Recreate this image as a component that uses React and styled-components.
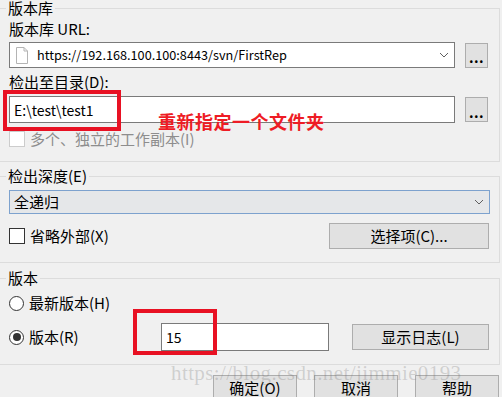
import React from 'react';
import styled, { createGlobalStyle } from 'styled-components';

const GlobalStyle = createGlobalStyle`
  html, body {
    margin: 0;
    padding: 0;
    background: #f0f0f0;
  }
  body {
    font-family: "Noto Sans CJK SC", "Noto Sans", sans-serif;
    font-size: 15px;
    color: #000;
  }
`;

const Window = styled.div`
  position: relative;
  width: 502px;
  height: 397px;
  overflow: hidden;
  background: #f0f0f0;
  display: flex;
  flex-direction: column;
`;

const Group = styled.fieldset`
  margin: ${p => p.$top || 0}px 0 0 -2px;
  width: 502px;
  box-sizing: border-box;
  min-width: 0;
  border: 1px solid #dcdcdc;
  padding: 0 10px ${p => p.$pb || 13}px 10px;
`;

const Legend = styled.legend`
  margin-left: -3px;
  padding: 0 2px;
  line-height: 16px;
  height: 16px;
`;

const Label = styled.div`
  margin-top: ${p => p.$mt || 0}px;
  line-height: 16px;
  height: 16px;
`;

const Row = styled.div`
  display: flex;
  align-items: center;
  margin-top: ${p => p.$mt || 0}px;
  height: ${p => p.$h}px;
  gap: ${p => p.$gap || 0}px;
`;

const Field = styled.div`
  box-sizing: border-box;
  display: flex;
  align-items: center;
  width: ${p => p.$w}px;
  height: ${p => p.$h}px;
  background: #fff;
  border: 1px solid #7a7a7a;
  padding: 0 ${p => p.$pr || 4}px 0 ${p => p.$pl || 4}px;
  gap: 9px;
  white-space: nowrap;
`;

const FieldText = styled.span`
  flex: 1;
  line-height: 16px;
  font-size: ${p => p.$size || 15}px;
`;

const Combo = styled.div`
  box-sizing: border-box;
  display: flex;
  align-items: center;
  width: 481px;
  height: 24px;
  margin-top: 6px;
  background: #e5e7e9;
  border: 1px solid #7da2ce;
  padding: 0 5px 0 4px;
`;

const Button = styled.button`
  box-sizing: border-box;
  width: ${p => p.$w}px;
  height: ${p => p.$h || 26}px;
  margin-left: ${p => (p.$auto ? 'auto' : '0')};
  padding: 0;
  background: #e1e1e1;
  border: 1px solid #adadad;
  font: inherit;
  color: #000;
  line-height: 16px;
`;

const DotsButton = styled(Button)`
  line-height: 10px;
  padding-top: 4px;
  font-size: 14px;
  font-weight: bold;
  letter-spacing: 0.5px;
`;

const Check = styled.label`
  display: flex;
  align-items: center;
  gap: 5px;
  line-height: 16px;
  color: ${p => (p.$disabled ? '#8d8d8d' : '#000')};
  margin-top: ${p => p.$mt || 0}px;
`;

const Box = styled.span`
  box-sizing: border-box;
  width: 16px;
  height: 16px;
  background: #fff;
  border: 1px solid ${p => (p.$disabled ? '#cccccc' : '#333')};
`;

const Radio = styled.span`
  box-sizing: border-box;
  width: 15px;
  height: 15px;
  border-radius: 50%;
  background: #fff;
  border: 1px solid #333;
  display: flex;
  align-items: center;
  justify-content: center;
  &::after {
    content: '';
    width: 8px;
    height: 8px;
    border-radius: 50%;
    background: ${p => (p.$on ? '#333' : 'transparent')};
  }
`;

const RadioCell = styled(Check)`
  width: 152px;
`;

const Footer = styled.div`
  display: flex;
  gap: 17px;
  margin-top: 10px;
  padding-left: 213px;
`;

const Mark = styled.div`
  position: absolute;
  left: ${p => p.$x}px;
  top: ${p => p.$y}px;
  width: ${p => p.$w}px;
  height: ${p => p.$h}px;
  box-sizing: border-box;
  border: 4px solid #e81123;
`;

const Note = styled.div`
  position: absolute;
  left: 158px;
  top: 110px;
  font-size: 18px;
  font-weight: 700;
  line-height: 22px;
  letter-spacing: 0.5px;
  color: #ee1c25;
`;

const Watermark = styled.div`
  position: absolute;
  left: 171px;
  top: 361px;
  font-family: "Liberation Serif", serif;
  font-size: 21px;
  line-height: 24px;
  letter-spacing: 0.4px;
  color: rgba(110, 110, 110, 0.26);
  pointer-events: none;
`;

const Chevron = () => (
  <svg width="10" height="6" viewBox="0 0 10 6">
    <polyline points="1,1 5,5 9,1" fill="none" stroke="#606060" strokeWidth="1" />
  </svg>
);

const FileIcon = () => (
  <svg width="12" height="17" viewBox="0 0 12 17">
    <path d="M0.5 0.5 H8 L11.5 4 V16.5 H0.5 Z" fill="#fff" stroke="#b4b4b4" />
    <path d="M8 0.5 V4 H11.5" fill="none" stroke="#b4b4b4" />
  </svg>
);

export default function App() {
  return (
    <Window>
      <GlobalStyle />
      <Group $pb={14}>
        <Legend>版本库</Legend>
        <Label $mt={5}>版本库 URL:</Label>
        <Row $mt={5} $h={26} $gap={10}>
          <Field $w={446} $h={26} $pl={6} $pr={5}>
            <FileIcon />
            <FieldText $size={12.7}>https://192.168.100.100:8443/svn/FirstRep</FieldText>
            <Chevron />
          </Field>
          <DotsButton $w={23} $h={25}>...</DotsButton>
        </Row>
        <Label $mt={6}>检出至目录(D):</Label>
        <Row $mt={6} $h={27} $gap={10}>
          <Field $w={446} $h={27}>
            <FieldText $size={14}>E:\test\test1</FieldText>
          </Field>
          <DotsButton $w={23} $h={25}>...</DotsButton>
        </Row>
        <Check $disabled $mt={8}>
          <Box $disabled />
          多个、独立的工作副本(I)
        </Check>
      </Group>

      <Group $top={6} $pb={13}>
        <Legend>检出深度(E)</Legend>
        <Combo>
          <FieldText>全递归</FieldText>
          <Chevron />
        </Combo>
        <Row $mt={9} $h={26}>
          <Check>
            <Box />
            省略外部(X)
          </Check>
          <Button $w={160} $auto>选择项(C)...</Button>
        </Row>
      </Group>

      <Group $top={7} $pb={13}>
        <Legend>版本</Legend>
        <Row $mt={7} $h={20}>
          <RadioCell>
            <Radio />
            最新版本(H)
          </RadioCell>
        </Row>
        <Row $mt={10} $h={28}>
          <RadioCell>
            <Radio $on />
            版本(R)
          </RadioCell>
          <Field $w={168} $h={28}>
            <FieldText $size={14}>15</FieldText>
          </Field>
          <Button $w={137} $auto>显示日志(L)</Button>
        </Row>
      </Group>

      <Footer>
        <Button $w={84}>确定(O)</Button>
        <Button $w={84}>取消</Button>
        <Button $w={84}>帮助</Button>
      </Footer>

      <Mark $x={3} $y={90} $w={118} $h={41} />
      <Mark $x={133} $y={309} $w={84} $h={46} />
      <Note>重新指定一个文件夹</Note>
      <Watermark>https://blog.csdn.net/jimmie0193</Watermark>
    </Window>
  );
}
